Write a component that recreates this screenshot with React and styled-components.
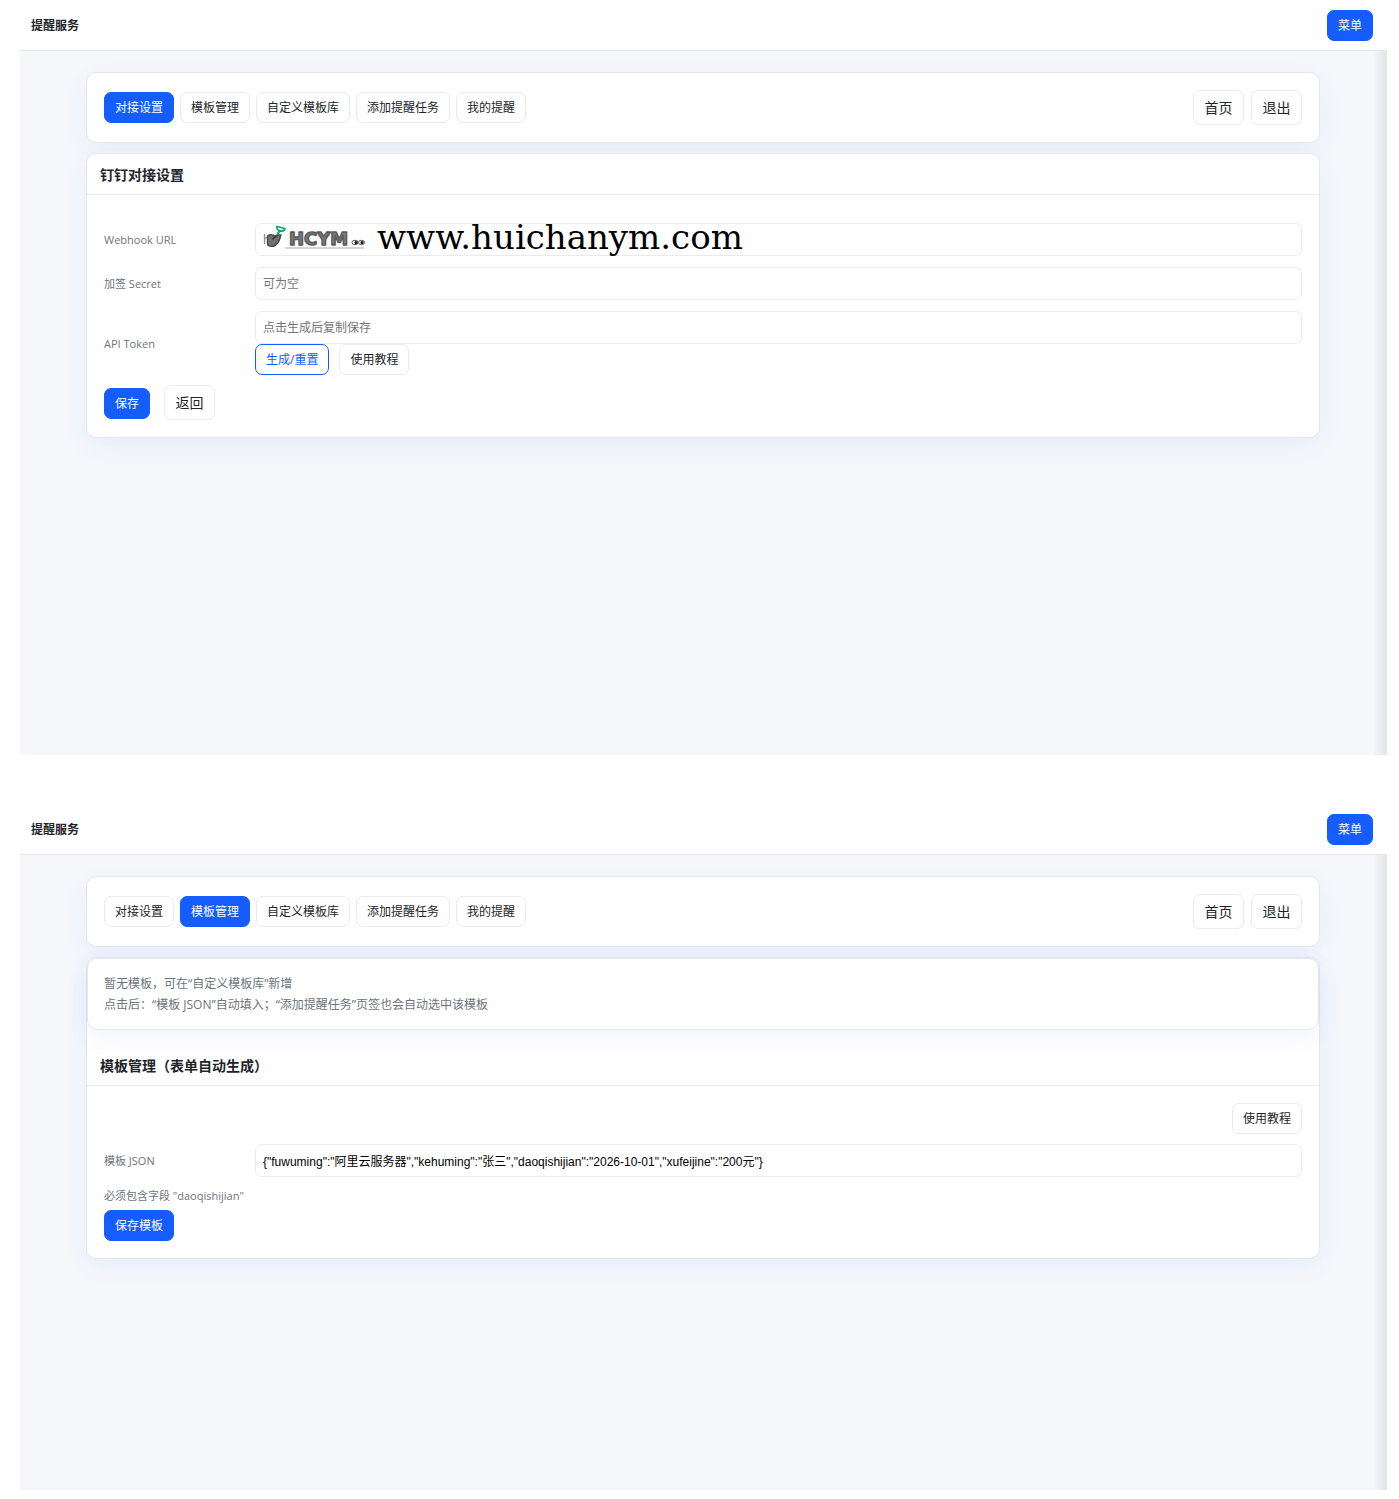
import React from "react";
import styled, { createGlobalStyle, css } from "styled-components";

const GlobalStyle = createGlobalStyle`
  *, *::before, *::after { box-sizing: border-box; }
  body {
    margin: 0;
    background: #fff;
    color: #212529;
    font-family: "Open Sans", "Noto Sans CJK SC", sans-serif;
    font-size: 12px;
    line-height: 21px;
  }
  button, input { font-family: inherit; }
`;

const Page = styled.div`
  display: flex;
  flex-direction: column;
  gap: 49px;
  padding: 0 12px 9px 20px;
`;

const Screen = styled.section`
  display: flex;
  flex-direction: column;
  min-height: ${(p) => p.$minHeight}px;
`;

const TopBar = styled.header`
  display: flex;
  align-items: center;
  justify-content: space-between;
  height: 51px;
  padding: 0 14px 0 11px;
  border-bottom: 1px solid #e5e6eb;
  background: #fff;
`;

const Brand = styled.strong`
  font-size: 12px;
  font-weight: 700;
`;

const Content = styled.main`
  flex: 1;
  display: flex;
  flex-direction: column;
  gap: 10px;
  padding: 21px 67px 21px 66px;
  background: linear-gradient(to left, #e2e3e5, #f5f7fb 14px);
`;

const cardLook = css`
  border: 1px solid #e5e6eb;
  border-radius: 10px;
  background: #fff;
  box-shadow: 0 8px 24px rgba(22, 93, 255, 0.06);
`;

const Card = styled.section`
  ${cardLook}
`;

const NavCard = styled.nav`
  ${cardLook}
  display: flex;
  align-items: center;
  justify-content: space-between;
  padding: 17px;
`;

const NoticeCard = styled.div`
  ${cardLook}
  margin-bottom: 15px;
  padding: 14px 16px;
  color: #6c757d;

  p { margin: 0; }
`;

const ButtonRow = styled.div`
  display: flex;
  align-items: baseline;
  justify-content: ${(p) => (p.$end ? "flex-end" : "flex-start")};
  gap: ${(p) => p.$gap || 6}px;
`;

const tones = {
  plain: css`
    border-color: #e9eaee;
    background: #fff;
    color: #212529;
  `,
  primary: css`
    border-color: #165dff;
    background: #165dff;
    color: #fff;
  `,
  outline: css`
    border-color: #165dff;
    background: #fff;
    color: #165dff;
  `,
};

const buttonLook = css`
  display: inline-flex;
  align-items: center;
  justify-content: center;
  height: 31px;
  padding: 0 10px;
  border: 1px solid;
  border-radius: 7px;
  font-size: 12px;
  line-height: 21px;
  white-space: nowrap;
  cursor: pointer;
`;

const Button = styled.button`
  ${buttonLook}
  ${(p) => tones[p.$tone || "plain"]}
`;

const LinkButton = styled.a`
  ${buttonLook}
  ${tones.plain}
  min-width: 51px;
  height: 35px;
  font-size: 14px;
  text-decoration: none;
`;

const CardTitle = styled.h2`
  display: flex;
  align-items: center;
  height: 41px;
  margin: 0;
  padding: 0 13px;
  border-bottom: 1px solid #e9eaee;
  font-size: 14px;
  font-weight: 700;
`;

const Form = styled.form`
  display: flex;
  flex-direction: column;
  gap: ${(p) => p.$gap}px;
  padding: ${(p) => p.$top}px 17px 17px;
`;

const Fields = styled.div`
  display: flex;
  flex-direction: column;
  gap: 11px;
`;

const FieldRow = styled.div`
  display: grid;
  grid-template-columns: 141px minmax(0, 1fr);
  align-items: center;
  column-gap: 10px;
`;

const Label = styled.label`
  color: #6c757d;
  font-size: 11px;
`;

const Control = styled.div`
  position: relative;
`;

const Input = styled.input`
  display: block;
  width: 100%;
  height: 33px;
  padding: 0 7px;
  border: 1px solid #e9eaee;
  border-radius: 7px;
  background: #fff;
  color: #000;
  font-size: 12px;
  outline: none;
  ${(p) => p.$code && css`font-family: "Liberation Sans", "Noto Sans CJK SC", sans-serif;`}

  &::placeholder { color: #757575; opacity: 1; }
`;

const Hint = styled.p`
  margin: -2px 0 -6px;
  color: #6c757d;
  font-size: 11px;
`;

const Watermark = styled.div`
  position: absolute;
  top: 0;
  left: 11px;
  display: flex;
  align-items: center;
  gap: 11px;
  height: 29px;
  pointer-events: none;
`;

const SiteName = styled.span`
  color: #000;
  font-family: "DejaVu Serif", serif;
  font-size: 34px;
  line-height: 29px;
`;

function HcymLogo() {
  return (
    <svg width="100" height="28" viewBox="0 0 100 28" aria-label="HCYM">
      <path
        d="M9 15L14 6"
        fill="none"
        stroke="#17a566"
        strokeWidth="2.200"
        strokeLinecap="round"
      />
      <path
        d="M11 2.500L19 4.500C18.500 6.500 17 7.500 14.500 7C12 6.500 10.500 5 11 2.500Z"
        fill="#fff"
        stroke="#17a566"
        strokeWidth="1.800"
        strokeLinejoin="round"
      />
      <path
        d="M1.500 12C4 9 5.500 11.500 7.500 11L10 13C11 11 13 10.500 15 11C14 13.500 14 16 12 18.500C9 22.500 5 23 2 21.500C0.500 18.500 2 15 1.500 12Z"
        fill="#6f7072"
        stroke="#444547"
        strokeWidth="1.300"
        strokeLinejoin="round"
      />
      <path d="M6.500 15.500L10 11.500" stroke="#303133" strokeWidth="1.500" />
      <path d="M19 24H98" stroke="#a9a9a9" strokeWidth="1" />
      <text
        x="23"
        y="21"
        fill="#7c7c7c"
        stroke="#5a5a5a"
        strokeWidth="1.500"
        strokeLinejoin="round"
        fontFamily="'DejaVu Sans', sans-serif"
        fontWeight="700"
        fontSize="18"
      >
        HCYM
      </text>
      <ellipse cx="89" cy="18.500" rx="3" ry="2.200" fill="#fff" stroke="#555" />
      <ellipse cx="95.500" cy="18.500" rx="3" ry="2.200" fill="#fff" stroke="#555" />
      <circle cx="90" cy="18.500" r="1.500" fill="#111" />
      <circle cx="96" cy="18.500" r="1.500" fill="#111" />
    </svg>
  );
}

const TABS = ["对接设置", "模板管理", "自定义模板库", "添加提醒任务", "我的提醒"];

function Header() {
  return (
    <TopBar>
      <Brand>提醒服务</Brand>
      <Button type="button" $tone="primary">菜单</Button>
    </TopBar>
  );
}

function Navigation({ active }) {
  return (
    <NavCard>
      <ButtonRow>
        {TABS.map((tab) => (
          <Button key={tab} type="button" $tone={tab === active ? "primary" : "plain"}>
            {tab}
          </Button>
        ))}
      </ButtonRow>
      <ButtonRow $gap={7}>
        <LinkButton href="#home">首页</LinkButton>
        <LinkButton href="#logout">退出</LinkButton>
      </ButtonRow>
    </NavCard>
  );
}

function ConnectionScreen() {
  return (
    <Screen $minHeight={755}>
      <Header />
      <Content>
        <Navigation active="对接设置" />
        <Card>
          <CardTitle>钉钉对接设置</CardTitle>
          <Form $top={28} $gap={10}>
            <Fields>
              <FieldRow>
                <Label htmlFor="webhook">Webhook URL</Label>
                <Control>
                  <Input id="webhook" placeholder="h" />
                  <Watermark>
                    <HcymLogo />
                    <SiteName>www.huichanym.com</SiteName>
                  </Watermark>
                </Control>
              </FieldRow>
              <FieldRow>
                <Label htmlFor="secret">加签 Secret</Label>
                <Input id="secret" placeholder="可为空" />
              </FieldRow>
              <FieldRow>
                <Label htmlFor="token">API Token</Label>
                <Control>
                  <Input id="token" placeholder="点击生成后复制保存" />
                  <ButtonRow $gap={10}>
                    <Button type="button" $tone="outline">生成/重置</Button>
                    <Button type="button">使用教程</Button>
                  </ButtonRow>
                </Control>
              </FieldRow>
            </Fields>
            <ButtonRow $gap={14}>
              <Button type="button" $tone="primary">保存</Button>
              <LinkButton href="#back">返回</LinkButton>
            </ButtonRow>
          </Form>
        </Card>
      </Content>
    </Screen>
  );
}

function TemplateScreen() {
  return (
    <Screen $minHeight={686}>
      <Header />
      <Content>
        <Navigation active="模板管理" />
        <Card>
          <NoticeCard>
            <p>暂无模板，可在“自定义模板库”新增</p>
            <p>点击后：“模板 JSON”自动填入；“添加提醒任务”页签也会自动选中该模板</p>
          </NoticeCard>
          <CardTitle>模板管理（表单自动生成）</CardTitle>
          <Form $top={17} $gap={10}>
            <ButtonRow $end>
              <Button type="button">使用教程</Button>
            </ButtonRow>
            <FieldRow>
              <Label htmlFor="template">模板 JSON</Label>
              <Input
                id="template"
                $code
                defaultValue={'{"fuwuming":"阿里云服务器","kehuming":"张三","daoqishijian":"2026-10-01","xufeijine":"200元"}'}
              />
            </FieldRow>
            <Hint>必须包含字段 "daoqishijian"</Hint>
            <ButtonRow>
              <Button type="button" $tone="primary">保存模板</Button>
            </ButtonRow>
          </Form>
        </Card>
      </Content>
    </Screen>
  );
}

export default function App() {
  return (
    <>
      <GlobalStyle />
      <Page>
        <ConnectionScreen />
        <TemplateScreen />
      </Page>
    </>
  );
}
